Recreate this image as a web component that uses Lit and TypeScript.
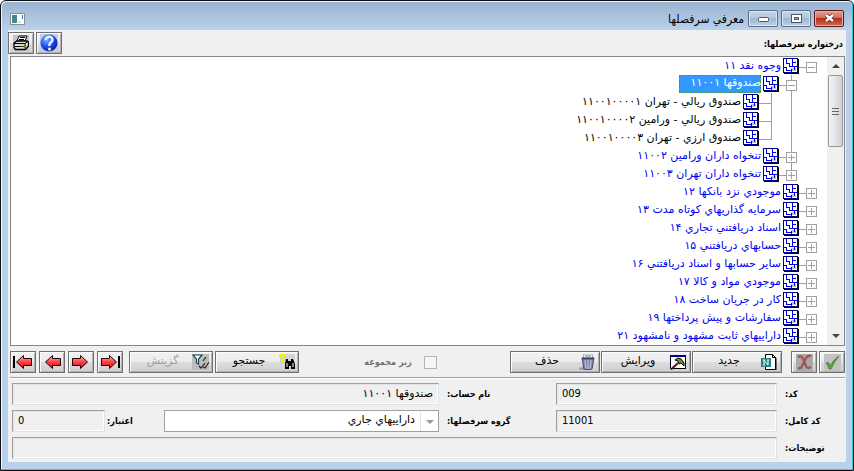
import { LitElement, html, css, svg, nothing } from "lit";
import { customElement, state } from "lit/decorators.js";

type Guide = "none" | "full" | "half";

interface TreeRow {
  level: number;
  label: string;
  mark: "minus" | "plus" | "leaf";
  guides?: Guide[];
  line?: Guide;
}

const ROWS: TreeRow[] = [
  { level: 0, label: "وجوه نقد ۱۱", mark: "minus" },
  { level: 1, label: "صندوقها ۱۱۰۰۱", mark: "minus", guides: ["none"], line: "full" },
  { level: 2, label: "صندوق ريالي - تهران ۱۱۰۰۱۰۰۰۰۱", mark: "leaf", guides: ["none", "full"], line: "full" },
  { level: 2, label: "صندوق ريالي - ورامين ۱۱۰۰۱۰۰۰۰۲", mark: "leaf", guides: ["none", "full"], line: "full" },
  { level: 2, label: "صندوق ارزي - تهران ۱۱۰۰۱۰۰۰۰۳", mark: "leaf", guides: ["none", "full"], line: "half" },
  { level: 1, label: "تنخواه داران ورامين ۱۱۰۰۲", mark: "plus", guides: ["none"], line: "full" },
  { level: 1, label: "تنخواه داران تهران ۱۱۰۰۳", mark: "plus", guides: ["none"], line: "half" },
  { level: 0, label: "موجودي نزد بانكها ۱۲", mark: "plus" },
  { level: 0, label: "سرمايه گذاريهاي كوتاه مدت ۱۳", mark: "plus" },
  { level: 0, label: "اسناد دريافتني تجاري ۱۴", mark: "plus" },
  { level: 0, label: "حسابهاي دريافتني ۱۵", mark: "plus" },
  { level: 0, label: "ساير حسابها و اسناد دريافتني ۱۶", mark: "plus" },
  { level: 0, label: "موجودي مواد و كالا ۱۷", mark: "plus" },
  { level: 0, label: "كار در جريان ساخت ۱۸", mark: "plus" },
  { level: 0, label: "سفارشات و پيش پرداختها ۱۹", mark: "plus" },
  { level: 0, label: "داراييهاي ثابت مشهود و نامشهود ۲۱", mark: "plus" },
];

const icon = (body: unknown, w = 16, h = 16) =>
  html`<svg width=${w} height=${h} viewBox="0 0 ${w} ${h}" aria-hidden="true">${body}</svg>`;

const nodeIcon = icon(svg`
  <g shape-rendering="crispEdges">
    <rect x="1" y="1" width="15" height="15" fill="#000010"/>
    <rect x="0" y="0" width="15" height="15" fill="#000080"/>
    <rect x="1" y="1" width="13" height="13" fill="#fff"/>
    <path d="M8 10h5v3H9v-1H8z" fill="#c4c4c4"/>
    <path d="M3 1h1v4h3v1H3zM6 6h1v3H6zM1 9h3v1H1zM3 10h1v2h5v1H3zM8 11h1v3H8zM9 1h1v3h3v1H9zM9 5h1v3H9zM6 8h8v1H6zM11 9h1v3h-1z" fill="#0000ee"/>
  </g>`);

const arrowBody = (bar: boolean) => svg`
  ${bar ? svg`<rect x="0" y="2" width="2" height="12" fill="#000"/>` : nothing}
  <path d="M3.500 8l7-6.500v3h8v7h-8v3z" fill="url(#red)" stroke="#200000"/>
  <defs><linearGradient id="red" x1="0" y1="0" x2="0" y2="1">
    <stop offset="0" stop-color="#ffc0c0"/><stop offset=".45" stop-color="#ff4a4e"/><stop offset="1" stop-color="#e80010"/>
  </linearGradient></defs>`;
const arrowLeft = (bar: boolean) => icon(arrowBody(bar), 20, 16);
const arrowRight = (bar: boolean) => icon(svg`<g transform="matrix(-1 0 0 1 20 0)">${arrowBody(bar)}</g>`, 20, 16);

const printerIcon = icon(svg`
  <rect width="16" height="16" fill="#c6c6c6"/>
  <path d="M4 6l2-5h8l-2 5z" fill="#fff" stroke="#000"/>
  <path d="M7 2.500h5M6 4.500h5" stroke="#000"/>
  <path d="M1 8l3-2h10l1.500 1v4l-3 3.500h-10l-1.500-2z" fill="#dcdcdc" stroke="#000" stroke-width="1.300"/>
  <path d="M1 8.500h11v5M12 8.500l3-2M2 11.500h9" stroke="#000" fill="none"/>
  <path d="M7 10.500h4" stroke="#ffea00" stroke-width="1.500"/>`);

const helpIcon = icon(svg`
  <rect width="18" height="18" fill="#c6cce0"/>
  <defs><radialGradient id="ball" cx=".35" cy=".3" r=".8"><stop offset="0" stop-color="#7fb4ff"/><stop offset=".5" stop-color="#1e4ff0"/><stop offset="1" stop-color="#0014a0"/></radialGradient></defs>
  <circle cx="9" cy="9" r="8.500" fill="url(#ball)"/>
  <path d="M6 6c-1-4 7-4.500 6.500 0c0 2-4 2.500-3 6" stroke="#e8f2ff" stroke-width="2.400" fill="none"/>
  <circle cx="9.500" cy="15" r="1.500" fill="#fff"/>`, 18, 18);

const checkIcon = icon(svg`
  <rect width="17" height="17" fill="#c2c2c2"/>
  <path d="M2 9q2-1 3 0l1 3q4-7 9-10q-5 6-8 13h-2q-1-4-3-6z" fill="#58b03c" stroke="#3d7a30" stroke-width=".8"/>`, 17, 17);

const crossIcon = icon(svg`
  <rect width="17" height="17" fill="#a9a9a9"/>
  <path d="M2 3q4-2 5 2l3 7q1 3 5 1M15 2q-4-1-6 4l-3 6q-1 3-4 2" fill="none" stroke="#7c5c5c" stroke-width="2.200"/>
  <path d="M2 3q4-2 5 2l3 7q1 3 5 1M14 2q-3 0-5 4l-3 6q-1 2-3 2" fill="none" stroke="#d04848"/>`, 17, 17);

const newIcon = icon(svg`
  <path d="M4.500.5h7l3 3v12h-10z" fill="#fff" stroke="#000"/>
  <path d="M11.500.5v3h3" fill="none" stroke="#000"/>
  <path d="M15 4v12H6" fill="none" stroke="#000"/>
  <rect x="0" y="4" width="10" height="9" fill="#2c8080"/>
  <path d="M3 11V6l4 5V6M2 6h2M6 6h2M2 11h2" fill="none" stroke="#fff"/>`);

const editIcon = icon(svg`
  <rect x=".5" y="1.500" width="15" height="13" fill="#fff" stroke="#000"/>
  <rect x="0" y="1" width="16" height="2" fill="#000090"/>
  <path d="M5 6l3-2l3 1l3 4v3l-3-3l-2 1l-1-3z" fill="#8a8a20" stroke="#000"/>
  <path d="M8 9l-7 6.500" stroke="#5a1010" stroke-width="2"/>`);

const binIcon = icon(svg`
  <ellipse cx="5" cy="14.500" rx="5" ry="1.500" fill="#9a9a9a"/>
  <path d="M5 0h8l1 5H4z" fill="#fff" stroke="#9ab"/>
  <path d="M6 2h6" stroke="#2a8a70"/>
  <path d="M3 4h12l-2 11q-4 1.500-8 0z" fill="#8684ac" stroke="#47456c"/>
  <path d="M6 6l1 9M9 6v9M12 6l-1 9" stroke="#c4c4e0"/>
  <path d="M3 4.500h12" stroke="#3d3b60" stroke-width="1.500"/>`);

const findIcon = icon(svg`
  <rect x="1" y="0" width="15" height="10" fill="#d4d4d4"/>
  <path d="M1 3V1h4v2L3.500 5v2M3.500 8v2" stroke="#f8ee00" stroke-width="2" fill="none"/>
  <path d="M7 5h2v2h3V5h2l2 5v5h-4v-3h-2v3H6v-5z" fill="#000"/>
  <path d="M8 9v4M14 9v4" stroke="#fff"/>`);

const filterIcon = icon(svg`
  <rect width="17" height="16" fill="#bdbdbd"/>
  <path d="M1 1h9l-3.500 4v5l-2-1V5z" fill="#fff" stroke="#164a5a" stroke-width="1.200"/>
  <path d="M7 12l2 2l4-5M11 13l2 1l4-6M11 7l3-4" fill="none" stroke="#222" stroke-width="1.200"/>`, 17, 16);

@customElement("account-tree")
class AccountTree extends LitElement {
  @state() private selected = 1;

  static styles = css`
    :host { display: flex; direction: rtl; background: #fff; border: 1px solid #828790; }
    ul { flex: 1; margin: 0; padding: 0 10px 0 0; list-style: none; }
    li { display: flex; height: 18px; align-items: stretch; cursor: default; color: #0000f0; }
    li.leaf { color: #000; }
    .guide { position: relative; width: 20px; flex: none; }
    .cell { position: relative; width: 11px; flex: none; display: flex; align-items: center; }
    .full::before, .half::before { content: ""; position: absolute; right: 5px; top: 0; width: 1px; height: 18px; background: #a0a0a0; }
    .half::before { height: 10px; }
    .box { position: relative; box-sizing: border-box; width: 11px; height: 11px; padding: 0; border: 1px solid #a0a0a0; background: #fff; margin-top: 2px; }
    .box::before { content: ""; position: absolute; left: 1px; right: 1px; top: 4px; height: 1px; background: #a0a0a0; }
    .plus::after { content: ""; position: absolute; top: 1px; bottom: 1px; left: 4px; width: 1px; background: #a0a0a0; }
    .leafline { width: 6px; height: 1px; margin: 2px auto 0 0; background: #a0a0a0; }
    .dash { width: 7px; height: 1px; margin-top: 10px; background: #a0a0a0; flex: none; }
    svg { display: block; flex: none; margin-top: 1px; }
    .label { box-sizing: border-box; height: 18px; padding: 0 2px; line-height: 18px; white-space: nowrap; }
    .on .label { background: #3399ff; color: #fff; outline: 1px dashed #4c9a2a; outline-offset: -1px; margin-right: 2px; padding: 0 0 0 12px; line-height: 16px; }
    .bar { width: 17px; flex: none; display: flex; flex-direction: column; align-items: center; background: #f0f0f0; }
    .bar button { width: 17px; height: 18px; padding: 0; border: 0; background: none; display: grid; place-items: center; }
    .tri { border: 4px solid transparent; border-top: 0; border-bottom-color: #444; }
    .tri.down { border-top: 4px solid #444; border-bottom: 0; }
    .thumb { box-sizing: border-box; width: 15px; height: 72px; border: 1px solid #979797; border-radius: 2px; background: linear-gradient(90deg, #f5f5f5, #e4e4e6 50%, #cfcfd2); display: grid; place-content: center; gap: 2px; }
    .thumb i { width: 7px; height: 1px; background: #666; }
    .space { flex: 1; }
  `;

  render() {
    return html`
      <div class="bar">
        <button aria-label="بالا"><span class="tri"></span></button>
        <div class="thumb"><i></i><i></i><i></i></div>
        <div class="space"></div>
        <button aria-label="پايين"><span class="tri down"></span></button>
      </div>
      <ul role="tree">
        ${ROWS.map((r, i) => html`
          <li role="treeitem" aria-level=${r.level + 1} aria-selected=${i === this.selected}
              class="${r.mark === "leaf" ? "leaf" : ""} ${i === this.selected ? "on" : ""}"
              @click=${() => (this.selected = i)}>
            ${(r.guides ?? []).map((g) => html`<span class="guide ${g}"></span>`)}
            <span class="cell ${r.line ?? "none"}">
              ${r.mark === "leaf"
                ? html`<span class="leafline"></span>`
                : html`<button class="box ${r.mark}" aria-label=${r.mark === "plus" ? "باز" : "بسته"}></button>`}
            </span>
            <span class="dash"></span>
            ${nodeIcon}
            <span class="label">${r.label}</span>
          </li>`)}
      </ul>`;
  }
}

@customElement("app-root")
class AppRoot extends LitElement {
  static styles = css`
    :host { display: block; min-height: 100vh; box-sizing: border-box; direction: rtl; background: #b9d1ea; color: #000;
      font: 11px/16px "DejaVu Sans", sans-serif;
      border: 1px solid #111; border-radius: 6px 6px 0 0; box-shadow: inset -1px -1px #35c5e6, inset 1px 1px #f4f9ff; padding: 1px 7px 6px; }
    * { box-sizing: border-box; }
    button, input, select { font: inherit; color: inherit; }
    svg { display: block; flex: none; }
    header { display: flex; align-items: center; height: 28px; margin: 0 -6px; padding: 0 8px; background: linear-gradient(#99b4d1, #b9d1ea); border-radius: 5px 5px 0 0; }
    h1 { flex: 1; margin: 0; padding: 5px 4px 0; font: 12px/20px "DejaVu Sans Condensed", "DejaVu Sans", sans-serif; }
    .win { display: flex; gap: 3px; padding: 4px 0 0; }
    .win button { width: 30px; height: 17px; padding: 0; display: grid; place-items: center; border: 1px solid #5c6f87; border-radius: 2px; background: linear-gradient(#c3d4e7, #b3c7de 50%, #9fb7d3 50%, #bcd0e6); box-shadow: inset 0 0 0 1px #d9e6f3; }
    .win .close { border-color: #5a1a18; background: linear-gradient(#e0a093, #cf6a58 50%, #b92f19 50%, #d06a50); box-shadow: inset 0 0 0 1px #e4b0a6; }
    .app { margin-top: 6px; }
    main { display: block; background: #f0f0f0; padding: 2px 1px 3px 2px; }
    .top { display: flex; align-items: center; justify-content: space-between; height: 24px; }
    .top b, .l, .chk { font: bold 9px/16px "DejaVu Sans Condensed", "DejaVu Sans", sans-serif; }
    .top b { padding: 0 2px; }
    .tools { display: flex; flex-direction: row-reverse; gap: 2px; margin-left: -2px; padding-bottom: 2px; }
    .btn { height: 22px; padding: 0; display: flex; align-items: center; justify-content: center; border: 1px solid #707070; box-shadow: inset 1px 1px #fcfcfc, inset -1px -1px #b0b0b0; background: linear-gradient(#f2f2f2, #ebebeb 50%, #dddddd 50%, #cfcfcf); }
    .sq { width: 26px; }
    .wide { width: 90px; padding: 0 4px; }
    .mid { width: 84px; padding: 0 3px; }
    .btn span { flex: 1; text-align: center; line-height: 14px; padding-bottom: 3px; }
    .btn:disabled { color: #a0a0a0; }
    .bar { display: flex; align-items: center; padding: 5px 0 4px; border-bottom: 1px solid #a0a0a0; box-shadow: 0 1px #fff; }
    .grp { display: flex; gap: 2px; }
    .cmd { gap: 1px; margin-right: 9px; margin-left: auto; }
    .chk { display: flex; align-items: center; gap: 12px; margin-left: auto; padding-right: 8px; color: #707070; }
    .chk input { appearance: none; width: 13px; height: 13px; margin: 0; border: 1px solid #b4b4b4; background: #f6f6f6; }
    .nav { gap: 3px; margin-right: 6px; }
    form { display: grid; grid-template-columns: 68px 221fr 117px 275fr 59px 93fr; row-gap: 5px; padding: 5px 0 0 2px; align-items: center; }
    .l { text-align: left; padding-left: 8px; white-space: nowrap; }
    .n { padding-left: 2px; }
    form input { width: 100%; min-width: 0; height: 22px; padding: 0 5px 2px; border: 1px solid; border-color: #a0a0a0 #dfe3ea #dfe3ea #a0a0a0; box-shadow: inset 1px 1px #e3e3e3, inset -1px -1px #fff; background: #f0f0f0; outline: 0; }
    form .ltr { direction: ltr; font-family: "DejaVu Sans Condensed", "DejaVu Sans", sans-serif; }
    .s3 { grid-column: span 3; }
    .s5 { grid-column: span 5; }
    .combo { position: relative; display: flex; }
    .combo select { appearance: none; width: 100%; height: 22px; padding: 0 23px 2px 4px; border: 1px solid #a0a0a0; border-radius: 0; background: #fff; }
    .combo i { position: absolute; top: 2px; right: 1px; bottom: 1px; width: 18px; border-left: 1px solid #e4e4e4; display: grid; place-items: center; pointer-events: none; }
    .combo i::after { content: ""; border: 4px solid transparent; border-top-color: #999; border-bottom: 0; }
  `;

  render() {
    return html`
      <header>
        <div class="win">
          <button class="close" aria-label="بستن">${icon(svg`<path d="M2 2l7 6M9 2l-7 6" stroke="#53201c" stroke-width="4"/><path d="M2 2l7 6M9 2l-7 6" stroke="#fff" stroke-width="2.500"/>`, 11, 10)}</button>
          <button aria-label="بزرگ">${icon(svg`<rect x="2" y="2" width="7" height="5" fill="none" stroke="#4a566a" stroke-width="4"/><rect x="2" y="2" width="7" height="5" fill="none" stroke="#fff" stroke-width="2"/>`, 11, 9)}</button>
          <button aria-label="كوچك">${icon(svg`<rect x=".5" y="4.500" width="10" height="4" rx="1" fill="#fff" stroke="#4a566a"/>`, 11, 10)}</button>
        </div>
        <h1>معرفي سرفصلها</h1>
        <svg class="app" width="15" height="12" viewBox="0 0 15 12"><rect x=".5" y=".5" width="14" height="11" fill="#fff" stroke="#8a8f96"/><rect x="2" y="2" width="5" height="8" fill="#3f9080"/><rect x="2" y="2" width="5" height="3" fill="#4876a8"/><rect x="12" y="2" width="1" height="4" fill="#3468c0"/><rect x="8" y="8" width="3" height="2" fill="#ddd"/></svg>
      </header>
      <main>
        <div class="top">
          <b>درختواره سرفصلها:</b>
          <div class="tools">
            <button class="btn sq" aria-label="چاپ">${printerIcon}</button>
            <button class="btn sq" aria-label="راهنما">${helpIcon}</button>
          </div>
        </div>
        <account-tree></account-tree>
        <div class="bar">
          <div class="grp">
            <button class="btn sq" aria-label="تاييد">${checkIcon}</button>
            <button class="btn sq" aria-label="انصراف">${crossIcon}</button>
          </div>
          <div class="grp cmd">
            <button class="btn wide">${newIcon}<span>جديد</span></button>
            <button class="btn wide">${editIcon}<span>ويرايش</span></button>
            <button class="btn wide">${binIcon}<span>حذف</span></button>
          </div>
          <label class="chk"><input type="checkbox" disabled />زير مجموعه</label>
          <div class="grp">
            <button class="btn mid">${findIcon}<span>جستجو</span></button>
            <button class="btn mid" disabled>${filterIcon}<span>گزينش</span></button>
          </div>
          <div class="grp nav">
            <button class="btn sq" aria-label="آخرين">${arrowRight(true)}</button>
            <button class="btn sq" aria-label="بعدي">${arrowRight(false)}</button>
            <button class="btn sq" aria-label="قبلي">${arrowLeft(false)}</button>
            <button class="btn sq" aria-label="اولين">${arrowLeft(true)}</button>
          </div>
        </div>
        <form>
          <label class="l" for="code">كد:</label>
          <input id="code" class="ltr" readonly value="009" />
          <label class="l" for="name">نام حساب:</label>
          <input id="name" class="s3" readonly value="صندوقها ۱۱۰۰۱" />
          <label class="l" for="full">كد كامل:</label>
          <input id="full" class="ltr" readonly value="11001" />
          <label class="l" for="group">گروه سرفصلها:</label>
          <div class="combo"><select id="group"><option>داراييهاي جاري</option></select><i></i></div>
          <label class="l n" for="credit">اعتبار:</label>
          <input id="credit" class="ltr" readonly value="0" />
          <label class="l" for="notes">توضيحات:</label>
          <input id="notes" class="s5" readonly value="" />
        </form>
      </main>`;
  }
}
